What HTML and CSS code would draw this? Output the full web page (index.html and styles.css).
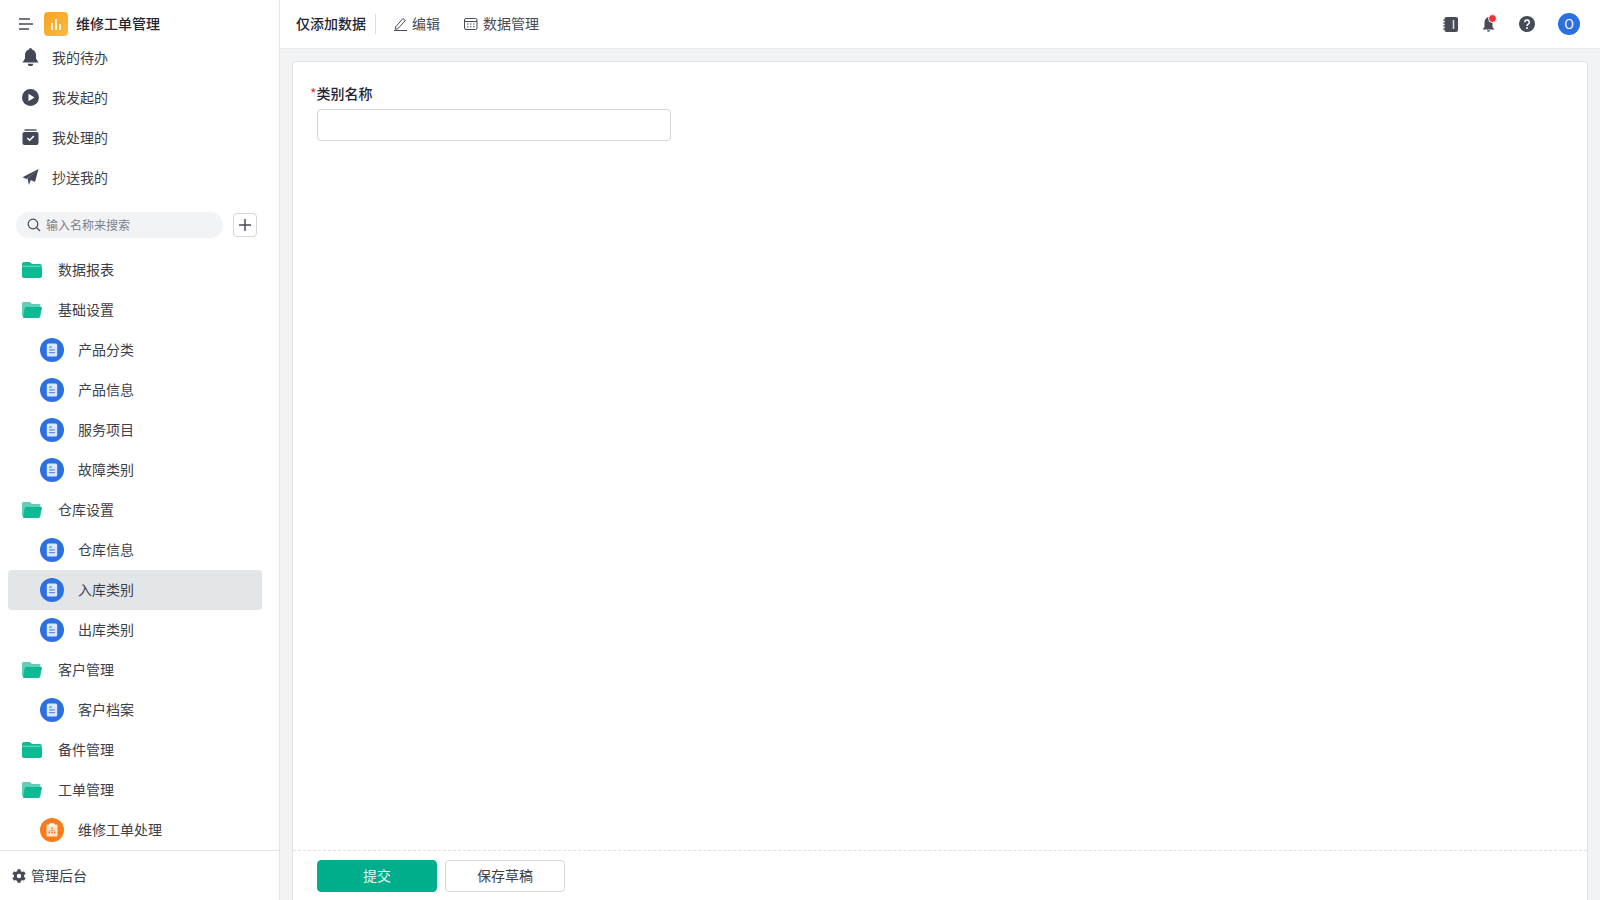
FILE: index.html
```html
<!DOCTYPE html>
<html lang="zh-CN">
<head>
    <meta charset="utf-8">
    <title>维修工单管理</title>
    <link rel="stylesheet" href="styles.css">
</head>
<body>
<svg class="sprites" xmlns="http://www.w3.org/2000/svg">
    <symbol id="folderClosed" viewBox="0 0 20 16">
        <path d="M2 0h5.200c.6 0 1 .2 1.400.6L10 2h8a2 2 0 0 1 2 2v10a2 2 0 0 1-2 2H2a2 2 0 0 1-2-2V2a2 2 0 0 1 2-2z" fill="#0fb993"/>
        <rect x="0" y="3.800" width="20" height=".8" fill="#9ce6d4"/>
    </symbol>
    <symbol id="folderOpen" viewBox="0 0 20 16">
        <path d="M1.500 0h5.700c.6 0 1 .2 1.400.6L10 2h7a1.500 1.500 0 0 1 1.500 1.500V5H4L1.500 14H1a1 1 0 0 1-1-1V1.500A1.500 1.500 0 0 1 1.500 0z" fill="#5fd0b6"/>
        <path d="M4 5h15a1 1 0 0 1 1 1l-1.800 8.500A2 2 0 0 1 16.300 16H2a1 1 0 0 1-1-1.200L2.800 6A1.200 1.200 0 0 1 4 5z" fill="#0fb993"/>
    </symbol>
    <symbol id="docBadge" viewBox="0 0 24 24">
        <circle cx="12" cy="12" r="12" fill="#2b6fe0"/>
        <rect x="6.800" y="5.600" width="10.400" height="12.800" rx="1.500" fill="#dbe7fb"/>
        <path d="M9 8.500h3v1.300H9zM9 11.200h6v1.300H9zM9 13.900h6v1.300H9z" fill="#5d8fe6"/>
    </symbol>
</svg>

<aside id="sidebar">
    <div class="brand">
        <svg class="menuIcon" width="14" height="12" viewBox="0 0 14 12"><path d="M0 1h11M0 6h14M0 11h10" stroke="#474b57" stroke-width="1.500" fill="none"/></svg>
        <span class="brandLogo">
            <svg width="12" height="12" viewBox="0 0 12 12"><path d="M1 5h2v7H1zM5 1h2v11H5zM9 6h2v6H9z" fill="#fff3d9"/></svg>
        </span>
        <span class="brandName">维修工单管理</span>
    </div>

    <nav class="quickNav">
        <a class="quickItem">
            <svg width="16" height="18" viewBox="0 0 16 18"><path d="M8 0a1.500 1.500 0 0 1 1.500 1.500C12 2.200 13.500 4.500 13.500 7v3.500L16 14.500H0l2.500-4V7c0-2.500 1.500-4.800 4-5.500A1.500 1.500 0 0 1 8 0zM5.300 15.700h5.400a2.700 2.300 0 0 1-5.400 0z" fill="#434756"/></svg>
            <span>我的待办</span>
        </a>
        <a class="quickItem">
            <svg width="17" height="17" viewBox="0 0 17 17"><circle cx="8.500" cy="8.500" r="8.500" fill="#434756"/><path d="M6.500 4.800l6 3.700-6 3.700z" fill="#fff"/></svg>
            <span>我发起的</span>
        </a>
        <a class="quickItem">
            <svg width="16" height="16" viewBox="0 0 16 16"><path d="M2.500 0h11l1 2h-13z" fill="#7b7f8b"/><rect y="3" width="16" height="13" rx="2" fill="#434756"/><path d="M4.800 9l2.300 2.300 4.200-4.200" stroke="#fff" stroke-width="1.500" fill="none"/></svg>
            <span>我处理的</span>
        </a>
        <a class="quickItem">
            <svg width="16" height="16" viewBox="0 0 16 16"><path d="M16 0L12.500 13 8.300 10.900 6.500 16 5 9.500zM16 0L0 8.200 4 9.900z" fill="#434756"/></svg>
            <span>抄送我的</span>
        </a>
    </nav>

    <div class="searchRow">
        <div class="searchBox">
            <svg width="14" height="14" viewBox="0 0 14 14"><circle cx="6" cy="6" r="4.800" stroke="#474b57" stroke-width="1.200" fill="none"/><path d="M9.500 9.500L13 13" stroke="#474b57" stroke-width="1.200"/></svg>
            <span>输入名称来搜索</span>
        </div>
        <button class="addButton">
            <svg width="14" height="14" viewBox="0 0 14 14"><path d="M7 1v12M1 7h12" stroke="#474b57" stroke-width="1.500"/></svg>
        </button>
    </div>

    <ul class="tree">
        <li class="treeRow"><svg class="folder"><use href="#folderClosed"/></svg><span>数据报表</span></li>
        <li class="treeRow"><svg class="folder"><use href="#folderOpen"/></svg><span>基础设置</span></li>
        <li class="treeRow child"><svg class="badge"><use href="#docBadge"/></svg><span>产品分类</span></li>
        <li class="treeRow child"><svg class="badge"><use href="#docBadge"/></svg><span>产品信息</span></li>
        <li class="treeRow child"><svg class="badge"><use href="#docBadge"/></svg><span>服务项目</span></li>
        <li class="treeRow child"><svg class="badge"><use href="#docBadge"/></svg><span>故障类别</span></li>
        <li class="treeRow"><svg class="folder"><use href="#folderOpen"/></svg><span>仓库设置</span></li>
        <li class="treeRow child"><svg class="badge"><use href="#docBadge"/></svg><span>仓库信息</span></li>
        <li class="treeRow child active"><svg class="badge"><use href="#docBadge"/></svg><span>入库类别</span></li>
        <li class="treeRow child"><svg class="badge"><use href="#docBadge"/></svg><span>出库类别</span></li>
        <li class="treeRow"><svg class="folder"><use href="#folderOpen"/></svg><span>客户管理</span></li>
        <li class="treeRow child"><svg class="badge"><use href="#docBadge"/></svg><span>客户档案</span></li>
        <li class="treeRow"><svg class="folder"><use href="#folderClosed"/></svg><span>备件管理</span></li>
        <li class="treeRow"><svg class="folder"><use href="#folderOpen"/></svg><span>工单管理</span></li>
        <li class="treeRow child">
            <svg class="badge" viewBox="0 0 24 24">
                <circle cx="12" cy="12" r="12" fill="#f97b1c"/>
                <rect x="6.500" y="6.500" width="11" height="12" rx="1.200" fill="#fde6d2"/>
                <rect x="9.500" y="5.300" width="5" height="2.400" rx=".6" fill="#fff"/>
                <path d="M11.200 9.500h1.600v1.600h-1.600zM8.500 13.800h1.600v1.600H8.500zM11.200 13.800h1.600v1.600h-1.600zM13.900 13.800h1.600v1.600h-1.600z" fill="#f97b1c"/>
                <path d="M12 11v1.600M9.300 13.800v-1.200h5.400v1.200" stroke="#f97b1c" stroke-width=".6" fill="none"/>
            </svg>
            <span>维修工单处理</span>
        </li>
    </ul>

    <div class="adminLink">
        <svg width="14" height="14" viewBox="0 0 14 14">
            <circle cx="7" cy="7" r="5.200" fill="#474b57"/>
            <rect x="5.300" y=".2" width="3.400" height="13.600" rx=".6" fill="#474b57"/>
            <rect x="5.300" y=".2" width="3.400" height="13.600" rx=".6" fill="#474b57" transform="rotate(60 7 7)"/>
            <rect x="5.300" y=".2" width="3.400" height="13.600" rx=".6" fill="#474b57" transform="rotate(120 7 7)"/>
            <circle cx="7" cy="7" r="2.200" fill="#fff"/>
        </svg>
        <span>管理后台</span>
    </div>
</aside>

<div id="main">
    <header class="topBar">
        <span class="pageName">仅添加数据</span>
        <span class="divider"></span>
        <a class="topLink">
            <svg width="14" height="14" viewBox="0 0 14 14"><path d="M1.500 10l7.500-8.500 2.300 2-7.500 8.300-2.500.4zM0 13.500h13" stroke="#474b57" stroke-width="1" fill="none"/></svg>
            <span>编辑</span>
        </a>
        <a class="topLink">
            <svg width="14" height="14" viewBox="0 0 14 14"><rect x=".5" y="1.500" width="12.500" height="11" rx="1.500" stroke="#474b57" fill="none"/><path d="M.5 4.500h12.500M3 7h1.500M6 7h1.500M9 7h1.500M3 9.800h1.500M6 9.800h1.500M9 9.800h1.500" stroke="#474b57" fill="none"/></svg>
            <span>数据管理</span>
        </a>
        <div class="topRight">
            <svg width="15" height="15" viewBox="0 0 15 15"><rect x="1.500" width="13.500" height="15" rx="2" fill="#474b57"/><path d="M0 3h2.500M0 6h2.500M0 9h2.500M0 12h2.500" stroke="#474b57"/><path d="M0 4.500h1.500M0 7.500h1.500M0 10.500h1.500" stroke="#fff" stroke-width=".8"/><path d="M10.500 3v9" stroke="#dfe1e5" stroke-width="1.500"/></svg>
            <span class="bellWrap">
                <svg width="13" height="16" viewBox="0 0 13 16"><path d="M6.500 1C9 1.500 10.500 4 10.500 6.500V11l2 2.500H.5l2-2.500V6.500C2.500 4 4 1.500 6.500 1zM5 14.300h3a1.500 1.500 0 0 1-3 0z" fill="#474b57"/></svg>
                <span class="redDot"></span>
            </span>
            <svg width="16" height="16" viewBox="0 0 16 16"><circle cx="8" cy="8" r="8" fill="#474b57"/><path d="M5.700 6.200a2.300 2.300 0 1 1 3.500 2c-.8.500-1.200.8-1.200 1.700" stroke="#fff" stroke-width="1.500" fill="none"/><circle cx="8" cy="12" r="1" fill="#fff"/></svg>
            <span class="avatar">O</span>
        </div>
    </header>

    <div class="content">
        <form class="formCard">
            <div class="formBody">
                <label class="fieldLabel"><span class="required">*</span>类别名称</label>
                <input class="fieldInput" type="text">
            </div>
            <div class="formFooter">
                <button class="btn primary" type="button">提交</button>
                <button class="btn" type="button">保存草稿</button>
            </div>
        </form>
    </div>
</div>
</body>
</html>
```

FILE: styles.css
```css
* {
    box-sizing: border-box;
}
html, body {
    height: 100%;
}
body {
    margin: 0;
    display: flex;
    height: 900px;
    overflow: hidden;
    background-color: #f1f3f5;
    color: #333;
    font-family: "Noto Sans CJK SC", "Noto Sans", sans-serif;
    font-size: 14px;
}
.sprites {
    display: none;
}

/* sidebar */
#sidebar {
    width: 280px;
    flex-shrink: 0;
    display: flex;
    flex-direction: column;
    background-color: #fff;
    border-right: 1px solid #e3e5e8;
}
.brand {
    height: 38px;
    padding: 12px 0 0 19px;
    display: flex;
    align-items: flex-start;
}
.menuIcon {
    margin-top: 6px;
}
.brandLogo {
    width: 24px;
    height: 24px;
    margin-left: 11px;
    border-radius: 4px;
    background: linear-gradient(135deg, #f5a524, #fbb93c);
    display: flex;
    align-items: center;
    justify-content: center;
    position: relative;
    z-index: 1;
}
.brandName {
    margin-left: 8px;
    line-height: 22px;
    font-weight: 500;
    color: #1f2430;
}
.quickNav {
    display: flex;
    flex-direction: column;
}
.quickItem {
    height: 40px;
    padding: 0 0 2px 22px;
    display: flex;
    align-items: center;
    color: #3d4049;
}
.quickItem svg {
    width: 17px;
    flex-shrink: 0;
}
.quickItem span {
    margin-left: 13px;
}
.searchRow {
    height: 26px;
    margin-top: 14px;
    padding-left: 16px;
    display: flex;
    align-items: center;
}
.searchBox {
    width: 207px;
    height: 26px;
    padding-left: 11px;
    border-radius: 13px;
    background-color: #f1f3f5;
    display: flex;
    align-items: center;
    color: #7d808a;
    font-size: 12px;
}
.searchBox span {
    margin: 0 0 2px 5px;
}
.addButton {
    width: 24px;
    height: 24px;
    margin-left: 10px;
    padding: 0;
    border: 1px solid #d4d6da;
    border-radius: 4px;
    background-color: #fff;
    display: flex;
    align-items: center;
    justify-content: center;
}
.tree {
    flex: 1;
    margin: 12px 0 0;
    padding: 0 17px 0 8px;
    list-style: none;
    overflow: hidden;
}
.treeRow {
    height: 40px;
    padding-left: 14px;
    border-radius: 4px;
    display: flex;
    align-items: center;
    color: #3d4049;
}
.treeRow span {
    margin-bottom: 2px;
}
.treeRow.child {
    padding-left: 32px;
}
.treeRow.active {
    background-color: #e2e6e8;
}
.folder {
    width: 20px;
    height: 16px;
    margin-right: 16px;
    flex-shrink: 0;
}
.badge {
    width: 24px;
    height: 24px;
    margin-right: 14px;
    flex-shrink: 0;
}
.adminLink {
    height: 50px;
    padding-left: 12px;
    border-top: 1px solid #e3e5e8;
    display: flex;
    align-items: center;
    color: #3d4049;
}
.adminLink span {
    margin: 0 0 2px 5px;
}

/* top bar */
#main {
    flex: 1;
    min-width: 0;
    display: flex;
    flex-direction: column;
}
.topBar {
    height: 49px;
    flex-shrink: 0;
    padding: 0 20px 0 16px;
    background-color: #fff;
    border-bottom: 1px solid #e8eaec;
    display: flex;
    align-items: center;
}
.pageName {
    margin-bottom: 2px;
    font-weight: 500;
    color: #1f2430;
}
.divider {
    width: 1px;
    height: 20px;
    margin: 0 18px 0 9px;
    background-color: #d9dbde;
}
.topLink {
    margin-right: 24px;
    display: flex;
    align-items: center;
    color: #474b57;
}
.topLink span {
    margin: 0 0 2px 4px;
}
.topLink + .topLink span {
    margin-left: 5px;
}
.topRight {
    margin-left: auto;
    display: flex;
    align-items: center;
    gap: 24px;
}
.bellWrap {
    position: relative;
    display: flex;
}
.redDot {
    position: absolute;
    top: -1px;
    right: -1px;
    width: 7px;
    height: 7px;
    border: 1px solid #fff;
    border-radius: 50%;
    background-color: #e5343a;
    box-sizing: content-box;
    margin: -1px;
}
.avatar {
    width: 22px;
    height: 22px;
    margin-left: -1px;
    border-radius: 50%;
    background-color: #2b6fe0;
    color: #fff;
    font-size: 13px;
    line-height: 21px;
    text-align: center;
}

/* form */
.content {
    flex: 1;
    min-height: 0;
    padding: 12px 12px 0;
}
.formCard {
    height: 100%;
    margin: 0;
    background-color: #fff;
    border: 1px solid #e2e4e7;
    border-bottom: none;
    border-radius: 4px 4px 0 0;
    display: flex;
    flex-direction: column;
}
.formBody {
    flex: 1;
    padding: 21px 24px 0;
}
.fieldLabel {
    display: block;
    height: 22px;
    line-height: 20px;
    font-weight: 500;
    color: #1f2430;
}
.required {
    margin-left: -7px;
    color: #e5343a;
    font-weight: 400;
}
.fieldInput {
    display: block;
    width: 354px;
    height: 32px;
    margin-top: 4px;
    border: 1px solid #d4d6da;
    border-radius: 4px;
    outline: none;
}
.formFooter {
    height: 50px;
    padding: 9px 24px 0;
    border-top: 1px dashed #dfe1e4;
    display: flex;
    gap: 8px;
}
.btn {
    width: 120px;
    height: 32px;
    padding: 0 0 2px;
    border: 1px solid #d4d6da;
    border-radius: 4px;
    background-color: #fff;
    color: #3d4049;
    font-family: inherit;
    font-size: 14px;
}
.btn.primary {
    border-color: #00ae8b;
    background-color: #00ae8b;
    color: #e3f7f2;
}
```
